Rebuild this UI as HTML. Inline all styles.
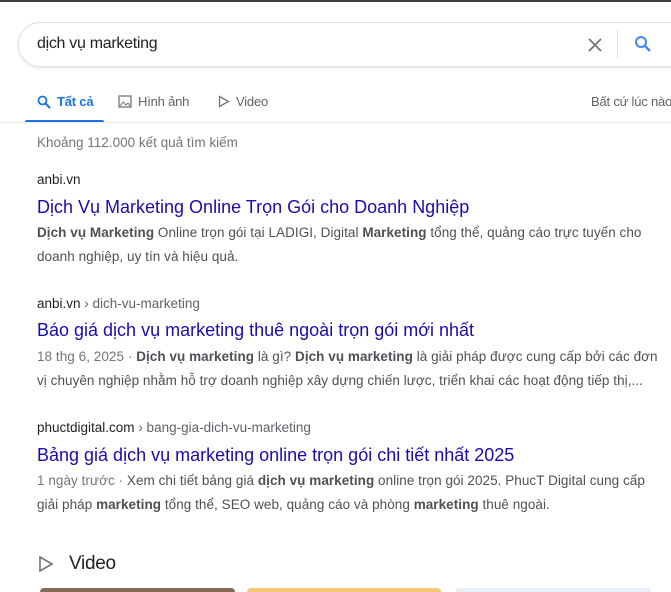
<!DOCTYPE html>
<html><head><meta charset="utf-8"><style>
*{margin:0;padding:0;box-sizing:border-box}
body{width:671px;height:592px;overflow:hidden;background:#fff;font-family:"Liberation Sans",Arial,sans-serif;position:relative;color:#4d5156}
.abs{position:absolute;white-space:nowrap}
.top{left:0;top:0;width:671px;height:2px;background:#3c4043}
.box{left:18px;top:22px;width:680px;height:45px;border:1px solid #dfe1e5;border-radius:23px;box-shadow:0 1px 3px rgba(32,33,36,.12)}
.q{left:37px;top:35px;font-size:16px;color:#202124;letter-spacing:-.3px}
.tab{top:94px;font-size:13px;color:#5f6368;letter-spacing:-.2px}
.ul{left:25px;top:120px;width:79px;height:3px;background:#1a73e8;border-radius:2px 2px 0 0}
.hr{left:0;top:122px;width:671px;height:1px;background:#ebebeb}
.cnt{left:37px;top:135px;font-size:13.5px;color:#70757a;letter-spacing:0}
.url{font-size:13.5px;color:#202124;letter-spacing:0}
.url span{color:#5f6368}
.t{font-size:18px;color:#1a0dab;letter-spacing:0}
.s{font-size:13.5px;color:#4d5156;letter-spacing:.05px;line-height:24px}
.s b{color:#4d5156;font-weight:bold}
.d{color:#70757a}
</style></head><body>
<div class="abs top"></div>
<div class="abs box"></div>
<div class="abs q">dịch vụ marketing</div>
<svg class="abs" style="left:587px;top:37px" width="16" height="16" viewBox="0 0 16 16"><path d="M2 2L14 14M14 2L2 14" stroke="#70757a" stroke-width="1.8"/></svg>
<div class="abs" style="left:617px;top:30px;width:1px;height:28px;background:#dfe1e5"></div>
<svg class="abs" style="left:634px;top:35px" width="18" height="18" viewBox="0 0 18 18"><circle cx="7" cy="7" r="5" fill="none" stroke="#4285f4" stroke-width="2"/><path d="M10.5 10.5L16 16" stroke="#4285f4" stroke-width="2.4"/></svg>
<svg class="abs" style="left:37px;top:95px" width="14" height="14" viewBox="0 0 14 14"><circle cx="5.5" cy="5.5" r="4" fill="none" stroke="#1a73e8" stroke-width="1.8"/><path d="M8.5 8.5L13 13" stroke="#1a73e8" stroke-width="2"/></svg>
<div class="abs tab" style="left:57px;color:#1a73e8;font-weight:bold">Tất cả</div>
<svg class="abs" style="left:118px;top:95px" width="14" height="13" viewBox="0 0 14 13"><rect x="1" y="1" width="12" height="11" fill="none" stroke="#70757a" stroke-width="1.3"/><path d="M2 11L5 7L8 10L10 8L12 11" fill="none" stroke="#70757a"/></svg>
<div class="abs tab" style="left:138px">Hình ảnh</div>
<svg class="abs" style="left:218px;top:95px" width="12" height="13" viewBox="0 0 12 13"><path d="M1.5 1.5L10.5 6.5L1.5 11.5Z" fill="none" stroke="#70757a" stroke-width="1.3"/></svg>
<div class="abs tab" style="left:236px">Video</div>
<div class="abs tab" style="left:591px">Bất cứ lúc nào</div>
<div class="abs ul"></div>
<div class="abs hr"></div>
<div class="abs cnt">Khoảng 112.000 kết quả tìm kiếm</div>

<div class="abs url" style="left:37px;top:172px">anbi.vn</div>
<div class="abs t" style="left:37px;top:197px">Dịch Vụ Marketing Online Trọn Gói cho Doanh Nghiệp</div>
<div class="abs s" style="left:37px;top:221px"><b>Dịch vụ Marketing</b> Online trọn gói tại LADIGI, Digital <b>Marketing</b> tổng thể, quảng cáo trực tuyến cho<br>doanh nghiệp, uy tín và hiệu quả.</div>

<div class="abs url" style="left:37px;top:296px">anbi.vn <span>› dich-vu-marketing</span></div>
<div class="abs t" style="left:37px;top:320px">Báo giá dịch vụ marketing thuê ngoài trọn gói mới nhất</div>
<div class="abs s" style="left:37px;top:345px"><span class="d">18 thg 6, 2025 · </span><b>Dịch vụ marketing</b> là gì? <b>Dịch vụ marketing</b> là giải pháp được cung cấp bởi các đơn<br>vị chuyên nghiệp nhằm hỗ trợ doanh nghiệp xây dựng chiến lược, triển khai các hoạt động tiếp thị,...</div>

<div class="abs url" style="left:37px;top:420px">phuctdigital.com <span>› bang-gia-dich-vu-marketing</span></div>
<div class="abs t" style="left:37px;top:445px">Bảng giá dịch vụ marketing online trọn gói chi tiết nhất 2025</div>
<div class="abs s" style="left:37px;top:469px"><span class="d">1 ngày trước · </span>Xem chi tiết bảng giá <b>dịch vụ marketing</b> online trọn gói 2025. PhucT Digital cung cấp<br>giải pháp <b>marketing</b> tổng thể, SEO web, quảng cáo và phòng <b>marketing</b> thuê ngoài.</div>

<svg class="abs" style="left:38px;top:555px" width="16" height="18" viewBox="0 0 16 18"><path d="M2 2L14 9L2 16Z" fill="none" stroke="#70757a" stroke-width="1.6"/></svg>
<div class="abs" style="left:69px;top:553px;font-size:19px;color:#202124;letter-spacing:-.3px">Video</div>
<div class="abs" style="left:40px;top:588px;width:195px;height:4px;background:#8a6a55;border-radius:4px 4px 0 0"></div>
<div class="abs" style="left:247px;top:588px;width:194px;height:4px;background:#f4c777;border-radius:4px 4px 0 0"></div>
<div class="abs" style="left:455px;top:588px;width:196px;height:4px;background:#e8eef5;border-radius:4px 4px 0 0"></div>
</body></html>
